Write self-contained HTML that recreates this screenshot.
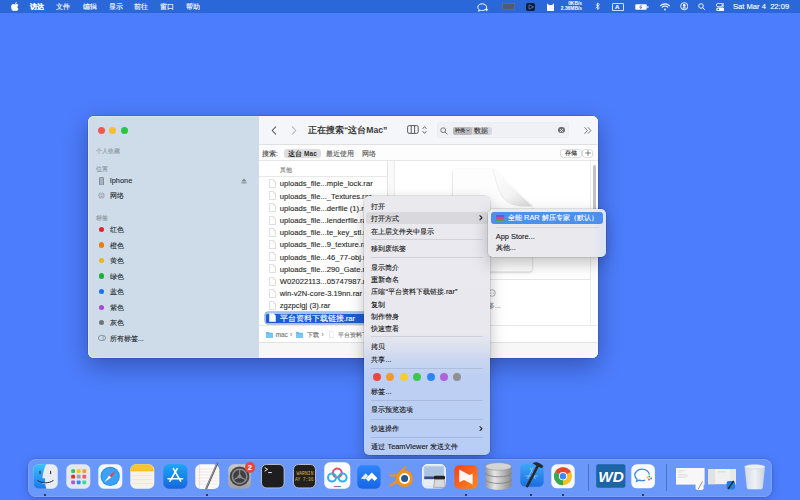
<!DOCTYPE html>
<html><head><meta charset="utf-8">
<style>
*{margin:0;padding:0;box-sizing:border-box}
html,body{width:800px;height:500px;overflow:hidden}
body{position:relative;-webkit-text-stroke:.12px currentColor;background:#4c7dfc;font-family:"Liberation Sans",sans-serif;color:#222;-webkit-font-smoothing:antialiased}
.a{position:absolute}
.t{position:absolute;white-space:nowrap;line-height:1}
#menubar{left:0;top:0;width:800px;height:13.3px;background:#2a67d8}
#menubar .t{color:#fff;font-size:7px;top:3px}
#win{left:87.5px;top:115.5px;width:510.2px;height:242px;border-radius:6px;overflow:hidden;background:#fff;box-shadow:0 8px 24px rgba(0,0,40,.33),0 0 0 .5px rgba(0,0,0,.22)}
#side{left:0;top:0;width:171px;height:242px;background:#cddce8}
.tl{width:7px;height:7px;border-radius:50%;top:11.1px}
.sh{font-size:6px;color:#8c959d}
.si{font-size:7.4px;color:#2a2f35}
.dot{width:5.6px;height:5.6px;border-radius:50%}
#main{left:171px;top:0;width:339.2px;height:242px;background:#fff}
#toolbar{left:0;top:0;width:339.2px;height:29px;background:#f5f6f9;border-bottom:.6px solid #dfe0e3}
#scope{left:0;top:29px;width:339.2px;height:16.5px;background:#fdfdfd;border-bottom:.6px solid #e6e6e6}
.ft{font-size:7.65px;color:#2b2b2b}
#menu{left:364px;top:196px;width:125.8px;height:259px;border-radius:5px;background:linear-gradient(#e9e9ee 0,#e8e8ee 138px,#dce1ee 150px,#c8d5f0 165px,#bdd0f3 180px,#b8cdf4 100%);box-shadow:0 0 0 .5px rgba(0,0,0,.18),0 6px 16px rgba(0,0,0,.25)}
.mi{font-size:7.4px;color:#1a1a1a}
.sep{height:.6px;background:rgba(40,40,70,.12);left:7px;width:111.5px}
#sub{left:488px;top:208.75px;width:118.4px;height:48.2px;border-radius:5px;background:linear-gradient(90deg,#e9e9ee 0,#e9e9ee 106px,#e0e4f0 113px,#dde3f2 100%);box-shadow:0 0 0 .5px rgba(0,0,0,.18),0 6px 16px rgba(0,0,0,.25)}
#dock{left:27.5px;top:458.75px;width:744.8px;height:38px;border-radius:8px;background:#6a97fa;box-shadow:inset 0 0 0 .5px rgba(255,255,255,.25),0 0 0 .5px rgba(30,40,120,.25),0 2px 8px rgba(20,30,120,.25)}
.ic{position:absolute;top:5px;width:25px;height:25px;border-radius:5.5px}
.ind{position:absolute;width:2.2px;height:2.2px;border-radius:50%;background:#1a1a2a;top:35px}
</style></head><body>

<div id="menubar" class="a">
  <svg class="a" style="left:11px;top:2px" width="8" height="9" viewBox="0 0 16 19"><path fill="#fff" d="M13.3 10.1c0-2.4 2-3.6 2.1-3.7-1.2-1.7-3-1.9-3.6-2-1.5-.2-3 .9-3.8.9-.8 0-2-.9-3.3-.9C3 4.5 1.4 5.5.6 7c-1.7 3-.4 7.4 1.2 9.8.8 1.2 1.8 2.5 3 2.4 1.2 0 1.7-.8 3.1-.8 1.5 0 1.9.8 3.2.8 1.3 0 2.1-1.2 2.9-2.4.9-1.4 1.3-2.7 1.3-2.8-.1 0-2.5-1-2.5-3.9zM10.9 2.9c.7-.8 1.1-1.9 1-3-1 0-2.1.7-2.8 1.5-.6.7-1.2 1.8-1 2.9 1.1.1 2.1-.6 2.8-1.4z"/></svg>
  <div class="t" style="left:30px;font-weight:bold">访达</div>
  <div class="t" style="left:56px">文件</div>
  <div class="t" style="left:82.5px">编辑</div>
  <div class="t" style="left:108.5px">显示</div>
  <div class="t" style="left:134px">前往</div>
  <div class="t" style="left:160px">窗口</div>
  <div class="t" style="left:186px">帮助</div>
  <svg class="a" style="left:477px;top:3px" width="12" height="9" viewBox="0 0 12 9"><path d="M5.2 .8C2.6.8.8 2.3.8 4.2c0 1 .5 1.8 1.3 2.4L1.6 8.2 3.6 7.3c.5.2 1 .2 1.6.2 2.6 0 4.4-1.5 4.4-3.3S7.8.8 5.2.8z" fill="none" stroke="#fff" stroke-width="1"/><path d="M9.6 5.2v3M8.1 6.7h3" stroke="#fff" stroke-width=".9"/></svg>
  <div class="a" style="left:501.5px;top:2.8px;width:13px;height:6.8px;border-radius:1px;background:#4b5c7d;box-shadow:inset 0 0 0 .5px #6a7a9a"></div>
  <div class="a" style="left:526.2px;top:2.6px;width:9px;height:8.2px;border-radius:2px;background:#0f1d3a"></div>
  <svg class="a" style="left:527.5px;top:3.8px" width="6.5" height="6" viewBox="0 0 6.5 6"><path d="M1 .8 5.5 3 1 5.2z" fill="none" stroke="#5a7ab0" stroke-width=".8"/></svg>
  <svg class="a" style="left:546px;top:2.5px" width="9" height="8.5" viewBox="0 0 9 8.5"><path d="M1 .3 2.8 2h3.4L8 .3v8H1z" fill="#fff"/></svg>
  <div class="t" style="left:556px;width:26px;text-align:right;top:1.9px;font-size:4.9px;font-weight:bold;-webkit-text-stroke:0;color:#fff">0KB/s</div>
  <div class="t" style="left:556px;width:26px;text-align:right;top:6.6px;font-size:4.9px;font-weight:bold;-webkit-text-stroke:0;color:#fff">2.36MB/s</div>
  <svg class="a" style="left:594.8px;top:2.4px" width="5.5" height="8.5" viewBox="0 0 5.5 8.5"><path d="M.7 2.3 4.4 5.8 2.6 7.6V.9l1.8 1.8L.7 6.2" fill="none" stroke="#fff" stroke-width=".8" stroke-linejoin="round"/></svg>
  <div class="a" style="left:612.3px;top:2.6px;width:11.8px;height:8.2px;border-radius:1.5px;box-shadow:inset 0 0 0 .8px #fff"></div>
  <div class="t" style="left:615.1px;top:3.9px;font-size:6px;font-weight:bold;color:#fff">A</div>
  <svg class="a" style="left:635px;top:3.8px" width="14" height="6" viewBox="0 0 14 6"><rect x=".3" y=".3" width="11.5" height="5.4" rx="1.3" fill="#fff"/><rect x="12.2" y="2" width="1.3" height="2" rx=".5" fill="#fff" opacity=".8"/><path d="M6.6 .8 4.6 3.2h2.2L5.2 5.2" fill="none" stroke="#2c63d8" stroke-width=".8"/></svg>
  <svg class="a" style="left:659.6px;top:3px" width="10" height="7.5" viewBox="0 0 10 7.5"><path d="M.6 2.6C3 .3 7 .3 9.4 2.6" fill="none" stroke="#fff" stroke-width="1.1" stroke-linecap="round"/><path d="M2.2 4.2c1.6-1.4 4-1.4 5.6 0" fill="none" stroke="#fff" stroke-width="1.1" stroke-linecap="round"/><circle cx="5" cy="6.5" r=".9" fill="#fff"/></svg>
  <svg class="a" style="left:679.8px;top:2.4px" width="8.5" height="8.5" viewBox="0 0 8.5 8.5"><circle cx="4.25" cy="4.25" r="3.6" fill="none" stroke="#fff" stroke-width=".9"/><circle cx="4.25" cy="3.4" r="1.3" fill="#fff"/><path d="M2 6.6c.6-1 1.3-1.4 2.25-1.4S5.9 5.6 6.5 6.6" fill="#fff"/></svg>
  <svg class="a" style="left:697.8px;top:2.8px" width="7.5" height="7.5" viewBox="0 0 7.5 7.5"><circle cx="3" cy="3" r="2.3" fill="none" stroke="#fff" stroke-width=".9"/><path d="M4.7 4.7 6.9 6.9" stroke="#fff" stroke-width="1" stroke-linecap="round"/></svg>
  <svg class="a" style="left:715.8px;top:2.6px" width="8.5" height="8.5" viewBox="0 0 8.5 8.5"><rect x=".4" y=".4" width="7.7" height="3.3" rx="1.6" fill="none" stroke="#fff" stroke-width=".8"/><circle cx="6.3" cy="2.05" r=".9" fill="#fff"/><rect x=".2" y="4.6" width="8.1" height="3.7" rx="1.8" fill="#fff"/><circle cx="2.2" cy="6.45" r=".9" fill="#2c63d8"/></svg>
  <div class="t" style="left:733px;font-size:7.6px;top:2.6px">Sat Mar 4&nbsp; 22:09</div>
</div>

<div id="win" class="a">
  <div id="side" class="a">
    <div class="a tl" style="left:10.8px;background:#ee5a52"></div>
    <div class="a tl" style="left:21.9px;background:#f5bd2f"></div>
    <div class="a tl" style="left:33px;background:#2bc640"></div>
    <div class="t sh" style="left:8.7px;top:32px">个人收藏</div>
    <div class="t sh" style="left:8.7px;top:50.6px">位置</div>
    <svg class="a" style="left:11.5px;top:61.2px" width="5" height="8.5" viewBox="0 0 5 8.5"><rect x=".4" y=".4" width="4.2" height="7.7" rx=".9" fill="#aab4be" stroke="#6d7680" stroke-width=".8"/></svg>
    <svg class="a" style="left:153.5px;top:62.5px" width="6" height="6" viewBox="0 0 6 6"><path d="M3 .5 5.6 3.4H.4z" fill="#7c858e"/><rect x=".4" y="4.4" width="5.2" height="1" fill="#7c858e"/></svg>
    <svg class="a" style="left:10.4px;top:76.8px" width="7" height="7" viewBox="0 0 7 7"><circle cx="3.5" cy="3.5" r="3.1" fill="#9aa4ae"/><path d="M.8 2.6c1.8.9 3.6.9 5.4 0M.8 4.4c1.8-.9 3.6-.9 5.4 0M3.5.4c-1.4 2-1.4 4.2 0 6.2M3.5.4c1.4 2 1.4 4.2 0 6.2" fill="none" stroke="#d6e0ea" stroke-width=".55"/></svg>
    <svg class="a" style="left:10.2px;top:219.7px" width="8" height="6" viewBox="0 0 8 6"><rect x=".4" y=".6" width="7.2" height="4.8" rx="2.4" fill="none" stroke="#6d7680" stroke-width=".7"/><path d="M5.2.8v4.4" stroke="#6d7680" stroke-width=".5"/></svg>
    <div class="t si" style="left:22.2px;top:61.5px">Iphone</div>
    <div class="t si" style="left:22.2px;top:76.6px">网络</div>
    <div class="t sh" style="left:8.7px;top:99px">标签</div>
    <div class="a dot" style="left:11px;top:111.3px;background:#e8202a"></div>
    <div class="t si" style="left:22.2px;top:110.7px">红色</div>
    <div class="a dot" style="left:11px;top:126.7px;background:#ee7d10"></div>
    <div class="t si" style="left:22.2px;top:126px">橙色</div>
    <div class="a dot" style="left:11px;top:142.2px;background:#e8b81a"></div>
    <div class="t si" style="left:22.2px;top:141.5px">黄色</div>
    <div class="a dot" style="left:11px;top:157.9px;background:#20b03a"></div>
    <div class="t si" style="left:22.2px;top:157.3px">绿色</div>
    <div class="a dot" style="left:11px;top:173.2px;background:#1a72f0"></div>
    <div class="t si" style="left:22.2px;top:172.6px">蓝色</div>
    <div class="a dot" style="left:11px;top:189px;background:#a848d0"></div>
    <div class="t si" style="left:22.2px;top:188.4px">紫色</div>
    <div class="a dot" style="left:11px;top:204.3px;background:#6f747a"></div>
    <div class="t si" style="left:22.2px;top:203.7px">灰色</div>
    <div class="t si" style="left:22.2px;top:219.4px">所有标签...</div>
  </div>
  <div id="main" class="a">
    <div id="toolbar" class="a">
      <svg class="a" style="left:12px;top:10px" width="6" height="9" viewBox="0 0 6 9"><path d="M4.6 .8 1.2 4.5 4.6 8.2" fill="none" stroke="#5a5a5e" stroke-width="1.1" stroke-linecap="round" stroke-linejoin="round"/></svg>
      <svg class="a" style="left:32px;top:10px" width="6" height="9" viewBox="0 0 6 9"><path d="M1.4 .8 4.8 4.5 1.4 8.2" fill="none" stroke="#b4b4b8" stroke-width="1.1" stroke-linecap="round" stroke-linejoin="round"/></svg>
      <div class="t" style="left:49.5px;top:10.4px;font-size:8.6px;font-weight:bold;-webkit-text-stroke:0;color:#3a3a3a">正在搜索“这台Mac”</div>
      <svg class="a" style="left:148.5px;top:9.6px" width="12" height="9" viewBox="0 0 12 9"><rect x=".6" y=".6" width="10.6" height="7.8" rx="1.6" fill="none" stroke="#5a5a5e" stroke-width="1"/><path d="M4.2 .8v7.4M7.6 .8v7.4" stroke="#5a5a5e" stroke-width="1"/></svg>
      <svg class="a" style="left:163px;top:9.3px" width="5" height="10" viewBox="0 0 5 10"><path d="M.8 3.6 2.5 1.6 4.2 3.6M.8 6.4 2.5 8.4 4.2 6.4" fill="none" stroke="#5a5a5e" stroke-width=".9" stroke-linecap="round" stroke-linejoin="round"/></svg>
      <div class="a" style="left:178.2px;top:6.9px;width:132px;height:15.2px;border-radius:4px;background:#f0f1f5;box-shadow:inset 0 0 0 .5px #e8e9ee"></div>
      <svg class="a" style="left:181.5px;top:11px" width="8" height="8" viewBox="0 0 8 8"><circle cx="3.2" cy="3.2" r="2.4" fill="none" stroke="#6a6a6e" stroke-width=".9"/><path d="M5 5 7.2 7.2" stroke="#6a6a6e" stroke-width=".9" stroke-linecap="round"/></svg>
      <div class="a" style="left:194.2px;top:11px;width:39.6px;height:8.4px;border-radius:2px;background:#d8d8dc"></div>
      <div class="a" style="left:194.2px;top:11px;width:19.8px;height:8.4px;border-radius:2px;background:#b8b8bd"></div>
      <div class="t" style="left:196px;top:12.9px;font-size:5px;color:#333">种类</div><svg class="a" style="left:207.6px;top:13.9px" width="4" height="3" viewBox="0 0 4 3"><path d="M.6 .7 2 2.1 3.4 .7" fill="none" stroke="#333" stroke-width=".7"/></svg>
      <div class="t" style="left:215.5px;top:12.3px;font-size:6.6px;color:#333">数据</div>
      <div class="a" style="left:299.5px;top:11.2px;width:6.8px;height:6.8px;border-radius:50%;background:#6e6e72"></div>
      <svg class="a" style="left:299.4px;top:11.1px" width="7" height="7" viewBox="0 0 7 7"><path d="M2.2 2.2 4.8 4.8M4.8 2.2 2.2 4.8" stroke="#efeff1" stroke-width=".9" stroke-linecap="round"/></svg>
      <svg class="a" style="left:325.2px;top:11.4px" width="8" height="7" viewBox="0 0 8 7"><path d="M.8 .6 3.4 3.5.8 6.4M4.2 .6 6.8 3.5 4.2 6.4" fill="none" stroke="#6a6a6e" stroke-width=".9" stroke-linecap="round" stroke-linejoin="round"/></svg>
    </div>
    <div id="scope" class="a">
      <div class="t" style="left:3.5px;top:6.2px;font-size:6.5px;color:#444">搜索:</div>
      <div class="a" style="left:25.8px;top:4.9px;width:37px;height:8.8px;border-radius:3px;background:#dededf"></div>
      <div class="t" style="left:29.8px;top:6.2px;font-size:6.5px;font-weight:bold;-webkit-text-stroke:0;color:#2e2e2e">这台 Mac</div>
      <div class="t" style="left:67.5px;top:6.2px;font-size:6.5px;color:#555">最近使用</div>
      <div class="t" style="left:103.5px;top:6.2px;font-size:6.5px;color:#555">网络</div>
      <div class="a" style="left:302.3px;top:5.2px;width:20.6px;height:7px;border-radius:1.8px;background:#fff;box-shadow:0 0 0 .6px #c4c4c8"></div>
      <div class="t" style="left:306px;top:5.6px;font-size:6.4px;color:#333">存储</div>
      <div class="a" style="left:324.9px;top:5.2px;width:8.8px;height:7px;border-radius:1.8px;background:#fff;box-shadow:0 0 0 .6px #c4c4c8"></div>
      <svg class="a" style="left:326.3px;top:5.7px" width="6" height="6" viewBox="0 0 6 6"><path d="M3 .2v5.6M.2 3h5.6" stroke="#444" stroke-width=".65"/></svg>
    </div>
    <div id="list" class="a" style="left:0;top:45.5px;width:128px;height:164px;background:#fff">
      <div class="a" style="left:0;top:0;width:128px;height:16px;background:#fff;border-bottom:.6px solid #e8e8e8"></div>
      <div class="t" style="left:21px;top:7px;font-size:5.8px;color:#777">其他</div>
      <svg class="a" style="left:10px;top:18.00px" width="7" height="9" viewBox="0 0 7 9"><path d="M.5 .5h3.9L6.5 2.6v5.9H.5z" fill="#fff" stroke="#c9c9cc" stroke-width=".6"/><path d="M4.4 .5v2.1h2.1" fill="none" stroke="#d4d4d6" stroke-width=".5"/></svg>
      <div class="t ft" style="left:21.2px;top:19.40px">uploads_file...mple_lock.rar</div>
      <svg class="a" style="left:10px;top:30.20px" width="7" height="9" viewBox="0 0 7 9"><path d="M.5 .5h3.9L6.5 2.6v5.9H.5z" fill="#fff" stroke="#c9c9cc" stroke-width=".6"/><path d="M4.4 .5v2.1h2.1" fill="none" stroke="#d4d4d6" stroke-width=".5"/></svg>
      <div class="t ft" style="left:21.2px;top:31.60px">uploads_file..._Textures.rar</div>
      <svg class="a" style="left:10px;top:42.40px" width="7" height="9" viewBox="0 0 7 9"><path d="M.5 .5h3.9L6.5 2.6v5.9H.5z" fill="#fff" stroke="#c9c9cc" stroke-width=".6"/><path d="M4.4 .5v2.1h2.1" fill="none" stroke="#d4d4d6" stroke-width=".5"/></svg>
      <div class="t ft" style="left:21.2px;top:43.80px">uploads_file...derfile (1).rar</div>
      <svg class="a" style="left:10px;top:54.60px" width="7" height="9" viewBox="0 0 7 9"><path d="M.5 .5h3.9L6.5 2.6v5.9H.5z" fill="#fff" stroke="#c9c9cc" stroke-width=".6"/><path d="M4.4 .5v2.1h2.1" fill="none" stroke="#d4d4d6" stroke-width=".5"/></svg>
      <div class="t ft" style="left:21.2px;top:56.00px">uploads_file...lenderfile.rar</div>
      <svg class="a" style="left:10px;top:66.80px" width="7" height="9" viewBox="0 0 7 9"><path d="M.5 .5h3.9L6.5 2.6v5.9H.5z" fill="#fff" stroke="#c9c9cc" stroke-width=".6"/><path d="M4.4 .5v2.1h2.1" fill="none" stroke="#d4d4d6" stroke-width=".5"/></svg>
      <div class="t ft" style="left:21.2px;top:68.20px">uploads_file...te_key_stl.rar</div>
      <svg class="a" style="left:10px;top:79.00px" width="7" height="9" viewBox="0 0 7 9"><path d="M.5 .5h3.9L6.5 2.6v5.9H.5z" fill="#fff" stroke="#c9c9cc" stroke-width=".6"/><path d="M4.4 .5v2.1h2.1" fill="none" stroke="#d4d4d6" stroke-width=".5"/></svg>
      <div class="t ft" style="left:21.2px;top:80.40px">uploads_file...9_texture.rar</div>
      <svg class="a" style="left:10px;top:91.20px" width="7" height="9" viewBox="0 0 7 9"><path d="M.5 .5h3.9L6.5 2.6v5.9H.5z" fill="#fff" stroke="#c9c9cc" stroke-width=".6"/><path d="M4.4 .5v2.1h2.1" fill="none" stroke="#d4d4d6" stroke-width=".5"/></svg>
      <div class="t ft" style="left:21.2px;top:92.60px">uploads_file...46_77-obj.rar</div>
      <svg class="a" style="left:10px;top:103.40px" width="7" height="9" viewBox="0 0 7 9"><path d="M.5 .5h3.9L6.5 2.6v5.9H.5z" fill="#fff" stroke="#c9c9cc" stroke-width=".6"/><path d="M4.4 .5v2.1h2.1" fill="none" stroke="#d4d4d6" stroke-width=".5"/></svg>
      <div class="t ft" style="left:21.2px;top:104.80px">uploads_file...290_Gate.rar</div>
      <svg class="a" style="left:10px;top:115.60px" width="7" height="9" viewBox="0 0 7 9"><path d="M.5 .5h3.9L6.5 2.6v5.9H.5z" fill="#fff" stroke="#c9c9cc" stroke-width=".6"/><path d="M4.4 .5v2.1h2.1" fill="none" stroke="#d4d4d6" stroke-width=".5"/></svg>
      <div class="t ft" style="left:21.2px;top:117.00px">W02022113...05747987.rar</div>
      <svg class="a" style="left:10px;top:127.80px" width="7" height="9" viewBox="0 0 7 9"><path d="M.5 .5h3.9L6.5 2.6v5.9H.5z" fill="#fff" stroke="#c9c9cc" stroke-width=".6"/><path d="M4.4 .5v2.1h2.1" fill="none" stroke="#d4d4d6" stroke-width=".5"/></svg>
      <div class="t ft" style="left:21.2px;top:129.20px">win-v2N-core-3.19nn.rar</div>
      <svg class="a" style="left:10px;top:140.00px" width="7" height="9" viewBox="0 0 7 9"><path d="M.5 .5h3.9L6.5 2.6v5.9H.5z" fill="#fff" stroke="#c9c9cc" stroke-width=".6"/><path d="M4.4 .5v2.1h2.1" fill="none" stroke="#d4d4d6" stroke-width=".5"/></svg>
      <div class="t ft" style="left:21.2px;top:141.40px">zgzpclgj (3).rar</div>
      <div class="a" style="left:6.25px;top:150.9px;width:130px;height:12.6px;border-radius:3.2px;background:#9fc3f6;box-shadow:0 0 0 .5px #7d8fb0"></div><div class="a" style="left:7.6px;top:152.6px;width:128px;height:9.2px;border-radius:1.6px;background:#1c5cd4"></div>
      <svg class="a" style="left:10px;top:152.20px" width="7" height="9" viewBox="0 0 7 9"><path d="M.5 .5h3.9L6.5 2.6v5.9H.5z" fill="#fff" stroke="#e8eefc" stroke-width=".6"/></svg>
      <div class="t ft" style="left:21.2px;top:153.60px;color:#fff">平台资料下载链接.rar</div>
    </div>
    <div class="a" style="left:128px;top:45.5px;width:8.1px;height:164px;background:#fafafa;border-left:.6px solid #e4e4e4;border-right:.6px solid #ececec"></div>
    <div id="prev" class="a" style="left:136.1px;top:45.5px;width:195px;height:164px;background:#fff">
      <svg class="a" style="left:54.8px;top:4.2px" width="87" height="110" viewBox="-4 -4 87 110"><defs><filter id="ds" x="-10%" y="-10%" width="120%" height="120%"><feGaussianBlur in="SourceAlpha" stdDeviation="1"/><feOffset dy=".5"/><feComponentTransfer><feFuncA type="linear" slope=".28"/></feComponentTransfer><feMerge><feMergeNode/><feMergeNode in="SourceGraphic"/></feMerge></filter><linearGradient id="fold" x1="0" y1="0" x2="1" y2="1"><stop offset="0" stop-color="#ffffff"/><stop offset=".55" stop-color="#f4f4f4"/><stop offset="1" stop-color="#d6d6d6"/></linearGradient></defs><path d="M3 0H39.6L79 37V99.3a3 3 0 0 1-3 3H3a3 3 0 0 1-3-3V3a3 3 0 0 1 3-3z" fill="#fdfdfd" filter="url(#ds)"/><path d="M39.6 0 79 37C70 37.5 60 37.5 53 32 45 25 43 10 39.6 0z" fill="url(#fold)"/><path d="M79 37C70 37.5 60 37.5 53 32 45 25 43 10 39.6 0" fill="none" stroke="#dcdcdc" stroke-width=".5"/></svg>
      <div class="a" style="left:4px;top:118.2px;width:191px;height:.6px;background:#e6e6e6"></div>
      <svg class="a" style="left:93.5px;top:127.5px" width="8" height="8" viewBox="0 0 8 8"><circle cx="4" cy="4" r="3.3" fill="none" stroke="#777" stroke-width=".6"/><circle cx="2.5" cy="4" r=".45" fill="#777"/><circle cx="4" cy="4" r=".45" fill="#777"/><circle cx="5.5" cy="4" r=".45" fill="#777"/></svg>
      <div class="t" style="left:86.5px;top:142.2px;font-size:6.6px;color:#888">更多...</div>
    </div>
    <div class="a" style="left:331.1px;top:45.5px;width:7.9px;height:164px;background:#fff;border-left:.6px solid #ececec"></div>
    <div class="a" style="left:334px;top:49.2px;width:3.4px;height:46px;border-radius:1.7px;background:#c2c2c4"></div>
    <div id="path" class="a" style="left:0;top:209.5px;width:339px;height:17px;background:#fff;border-top:.6px solid #e8e8e8">
      <svg class="a" style="left:7.75px;top:5.5px" width="7" height="6" viewBox="0 0 7 6"><path d="M0 .6C0 .3.3 0 .6 0h2l.7.8h3.1c.3 0 .6.3.6.6V5.4c0 .3-.3.6-.6.6H.6C.3 6 0 5.7 0 5.4z" fill="#5fb4ea"/><path d="M0 1.6h7V5.4c0 .3-.3.6-.6.6H.6C.3 6 0 5.7 0 5.4z" fill="#7cc6f4"/></svg>
      <div class="t" style="left:17.2px;top:6px;font-size:6.4px;color:#777">mac</div>
      <div class="t" style="left:31.5px;top:5.6px;font-size:6.6px;color:#888">›</div>
      <svg class="a" style="left:37.75px;top:5.5px" width="7" height="6" viewBox="0 0 7 6"><path d="M0 .6C0 .3.3 0 .6 0h2l.7.8h3.1c.3 0 .6.3.6.6V5.4c0 .3-.3.6-.6.6H.6C.3 6 0 5.7 0 5.4z" fill="#5fb4ea"/><path d="M0 1.6h7V5.4c0 .3-.3.6-.6.6H.6C.3 6 0 5.7 0 5.4z" fill="#7cc6f4"/></svg>
      <div class="t" style="left:48.2px;top:5.9px;font-size:6.4px;color:#777">下载</div>
      <div class="t" style="left:63px;top:5.6px;font-size:6.6px;color:#888">›</div>
      <svg class="a" style="left:70px;top:4.8px" width="5.5" height="7" viewBox="0 0 5.5 7"><path d="M.3 .3h3.2l1.7 1.7v4.7H.3z" fill="#fff" stroke="#c8c8ca" stroke-width=".5"/></svg>
      <div class="t" style="left:79px;top:5.9px;font-size:6.4px;color:#777">平台资料下载链接.rar</div>
    </div>
    <div id="status" class="a" style="left:0;top:226.5px;width:339.2px;height:15.5px;background:#f7f7f8;border-top:.6px solid #e2e2e2"></div>
  </div>
</div>

<div class="a" style="left:87.5px;top:115.5px;width:510.2px;height:242px;border-radius:6px;box-shadow:inset 0 0 0 .6px rgba(255,255,255,.55)"></div>
<div id="menu" class="a">
  <div class="a" style="left:2px;top:15.6px;width:122.6px;height:12.4px;border-radius:3px;background:#d9d9dd"></div>
  <div class="t mi" style="left:7.4px;top:7.00px">打开</div>
  <div class="t mi" style="left:7.4px;top:19.00px">打开方式</div>
  <div class="t mi" style="left:7.4px;top:31.60px">在上层文件夹中显示</div>
  <div class="a sep" style="top:43.30px"></div>
  <div class="t mi" style="left:7.4px;top:49.40px">移到废纸篓</div>
  <div class="a sep" style="top:61.10px"></div>
  <div class="t mi" style="left:7.4px;top:67.60px">显示简介</div>
  <div class="t mi" style="left:7.4px;top:80.00px">重新命名</div>
  <div class="t mi" style="left:7.4px;top:92.00px">压缩“平台资料下载链接.rar”</div>
  <div class="t mi" style="left:7.4px;top:104.60px">复制</div>
  <div class="t mi" style="left:7.4px;top:117.00px">制作替身</div>
  <div class="t mi" style="left:7.4px;top:129.00px">快速查看</div>
  <div class="a sep" style="top:140.30px"></div>
  <div class="t mi" style="left:7.4px;top:147.40px">拷贝</div>
  <div class="t mi" style="left:7.4px;top:160.00px">共享...</div>
  <div class="a sep" style="top:171.70px"></div>
  <div class="a" style="left:9.00px;top:177.00px;width:8px;height:8px;border-radius:50%;background:#f0463e"></div>
  <div class="a" style="left:22.40px;top:177.00px;width:8px;height:8px;border-radius:50%;background:#f59a2a"></div>
  <div class="a" style="left:35.80px;top:177.00px;width:8px;height:8px;border-radius:50%;background:#f7cc30"></div>
  <div class="a" style="left:49.20px;top:177.00px;width:8px;height:8px;border-radius:50%;background:#3ec54e"></div>
  <div class="a" style="left:62.60px;top:177.00px;width:8px;height:8px;border-radius:50%;background:#2f86f2"></div>
  <div class="a" style="left:76.00px;top:177.00px;width:8px;height:8px;border-radius:50%;background:#b063d8"></div>
  <div class="a" style="left:89.40px;top:177.00px;width:8px;height:8px;border-radius:50%;background:#909094"></div>
  <div class="t mi" style="left:7.4px;top:191.60px">标签...</div>
  <div class="a sep" style="top:203.70px"></div>
  <div class="t mi" style="left:7.4px;top:210.00px">显示预览选项</div>
  <div class="a sep" style="top:222.70px"></div>
  <div class="t mi" style="left:7.4px;top:228.60px">快速操作</div>
  <div class="a sep" style="top:241.30px"></div>
  <div class="t mi" style="left:7.4px;top:246.60px">通过 TeamViewer 发送文件</div>
  <svg class="a" style="left:114.7px;top:19.30px" width="4" height="5.5" viewBox="0 0 4 5.5"><path d="M.9 .7 3 2.75.9 4.8" fill="none" stroke="#222" stroke-width="1.05" stroke-linecap="round" stroke-linejoin="round"/></svg>
  <svg class="a" style="left:114.7px;top:229.90px" width="4" height="5.5" viewBox="0 0 4 5.5"><path d="M.9 .7 3 2.75.9 4.8" fill="none" stroke="#222" stroke-width="1.05" stroke-linecap="round" stroke-linejoin="round"/></svg>
</div>
<div id="sub" class="a">
  <div class="a" style="left:2.85px;top:3.3px;width:112.55px;height:11.6px;border-radius:3px;background:#4c8fec"></div>
  <div class="a" style="left:7.75px;top:6.15px;width:7.85px;height:6.5px;background:linear-gradient(#7a52c8 0,#7a52c8 33%,#e23c9a 33%,#e23c9a 66%,#34b04a 66%)"></div>
  <div class="t mi" style="left:20px;top:5.15px;color:#fff">全能 RAR 解压专家（默认）</div>
  <div class="a sep" style="left:7.75px;top:18px;width:103px;background:rgba(40,40,70,.09)"></div>
  <div class="t mi" style="left:7.75px;top:24.4px">App Store...</div>
  <div class="t mi" style="left:7.75px;top:35.65px">其他...</div>
</div>

<div id="dock" class="a">
  <svg class="a" style="left:5.30px;top:4.85px" width="25" height="25" viewBox="0 0 25 25"><defs><linearGradient id="fb" x1="0" y1="0" x2="0" y2="1"><stop offset="0" stop-color="#3ec0fb"/><stop offset="1" stop-color="#1a78ee"/></linearGradient></defs><rect x=".3" y=".3" width="24.4" height="24.4" rx="5.5" fill="#e9edf1"/><path d="M5.8.3C2.8.3.3 2.8.3 5.8v13.4c0 3 2.5 5.5 5.5 5.5h7.6c-.6-1.6-1-3.2-1.2-5-.9 0-1.9 0-2.8-.2l.2-1c.8.1 1.7.2 2.5.2-.1-1.5-.1-3 0-4.4H9.4c.3-4 1.4-8.7 3.7-14.3z" fill="url(#fb)"/><path d="M7 7.4v2.2M17.6 7.4v2.2" stroke="#1b2a3a" stroke-width="1.1" stroke-linecap="round"/><path d="M4.8 16.6c4.2 3 11 3 15.4 0" fill="none" stroke="#1b2a3a" stroke-width="1" stroke-linecap="round"/></svg>
  <svg class="a" style="left:38.50px;top:4.85px" width="25" height="25" viewBox="0 0 25 25"><rect x=".3" y=".3" width="24" height="24.4" rx="5.5" fill="#e3e7ee"/><rect x="5.2" y="5.2" width="3.8" height="3.8" rx=".9" fill="#34c759"/><rect x="10.8" y="5.2" width="3.8" height="3.8" rx=".9" fill="#fcc21b"/><rect x="16.4" y="5.2" width="3.8" height="3.8" rx=".9" fill="#ff9b2a"/><rect x="5.2" y="10.8" width="3.8" height="3.8" rx=".9" fill="#e8302a"/><rect x="10.8" y="10.8" width="3.8" height="3.8" rx=".9" fill="#a0a0a5"/><rect x="16.4" y="10.8" width="3.8" height="3.8" rx=".9" fill="#f25d6c"/><rect x="5.2" y="16.4" width="3.8" height="3.8" rx=".9" fill="#a55be0"/><rect x="10.8" y="16.4" width="3.8" height="3.8" rx=".9" fill="#2a8cf4"/><rect x="16.4" y="16.4" width="3.8" height="3.8" rx=".9" fill="#3ed3a0"/></svg>
  <svg class="a" style="left:70.50px;top:4.85px" width="25" height="25" viewBox="0 0 25 25"><rect x=".3" y=".3" width="24" height="24.4" rx="5.5" fill="#f4f6f8"/><circle cx="12.2" cy="12.4" r="9.6" fill="#1f8ff0"/><circle cx="12.2" cy="12.4" r="8.6" fill="#3aa2f6"/><path d="M18.2 6.5 13.2 13.4 11.2 11.4z" fill="#f04040"/><path d="M6.2 18.3 11.2 11.4 13.2 13.4z" fill="#f5f5f5"/></svg>
  <svg class="a" style="left:102.50px;top:4.85px" width="25" height="25" viewBox="0 0 25 25"><rect x=".3" y=".3" width="24" height="24.4" rx="5.5" fill="#f6f2e8"/><path d="M5.8.3h12.4c3 0 5.5 2.5 5.5 5.5V7H.3V5.8C.3 2.8 2.8.3 5.8.3z" fill="#fbc52d"/><path d="M.3 7h24" stroke="#e0a818" stroke-width=".5"/><path d="M2 11.5h20.6M2 15.5h20.6M2 19.5h20.6" stroke="#dedad0" stroke-width=".4"/></svg>
  <svg class="a" style="left:135.40px;top:4.85px" width="25" height="25" viewBox="0 0 25 25"><defs><linearGradient id="ab" x1="0" y1="0" x2="0" y2="1"><stop offset="0" stop-color="#1ca6f6"/><stop offset="1" stop-color="#1766dc"/></linearGradient></defs><rect x=".3" y=".3" width="24" height="24.4" rx="5.5" fill="url(#ab)"/><path d="M14.2 4.6 7 17.2M10.4 4.6 17.6 17.2M5 14.8h14.6" stroke="#fff" stroke-width="1.6" stroke-linecap="round"/></svg>
  <svg class="a" style="left:167.50px;top:2.85px" width="25" height="28" viewBox="0 0 25 28"><rect x=".3" y="2.3" width="24" height="24.6" rx="5.5" fill="#fbfbfb"/><path d="M1.5 7h21.6M1.5 10h21.6M1.5 13h21.6M1.5 16h21.6M1.5 19h21.6M1.5 22h21.6" stroke="#e8c4c4" stroke-width=".4"/><path d="M4.6 3v23" stroke="#eab0b0" stroke-width=".4"/><path d="M22.6.6 11 27.2" stroke="#55595e" stroke-width="2"/><path d="M22.2.8 10.8 27" stroke="#c4c8cc" stroke-width=".6"/></svg>
  <svg class="a" style="left:200.10px;top:4.85px" width="25" height="25" viewBox="0 0 25 25"><defs><linearGradient id="sp" x1="0" y1="0" x2="0" y2="1"><stop offset="0" stop-color="#c9c9cb"/><stop offset="1" stop-color="#a0a0a4"/></linearGradient></defs><rect x=".3" y=".3" width="22.6" height="24.4" rx="5.5" fill="url(#sp)"/><circle cx="11.6" cy="12.4" r="9.8" fill="#444447"/><circle cx="11.6" cy="12.4" r="8" fill="#8a8a8e"/><circle cx="11.6" cy="12.4" r="6.4" fill="#3e3e41"/><circle cx="11.6" cy="12.4" r="2" fill="#8a8a8e"/><path d="M11.6 12.4V6.2M11.6 12.4 6.4 15.5M11.6 12.4l5.2 3.1" stroke="#8a8a8e" stroke-width="1.3"/></svg>
  <svg class="a" style="left:233.30px;top:5.05px" width="24" height="25" viewBox="0 0 24 25"><rect x=".5" y=".5" width="22.6" height="23.4" rx="5" fill="#1e1e20" stroke="#cfd3da" stroke-width=".8"/><path d="M3.6 3.6 6.6 5.4 3.6 7.2" fill="none" stroke="#fff" stroke-width=".9"/><path d="M7.2 8.6h3.6" stroke="#fff" stroke-width=".9"/></svg>
  <svg class="a" style="left:265.70px;top:5.05px" width="23.5" height="25" viewBox="0 0 23.5 25"><rect x=".5" y=".5" width="22" height="23.4" rx="5" fill="#222120" stroke="#cfd3da" stroke-width=".8"/><text x="3.4" y="10.6" font-family="Liberation Mono" font-size="4.6" fill="#d8b440" textLength="17">WARNIN</text><text x="2" y="17.2" font-family="Liberation Mono" font-size="4.6" fill="#d8b440" textLength="18.5">AY 7:36</text></svg>
  <svg class="a" style="left:296.10px;top:3.65px" width="27" height="27" viewBox="0 0 27 27"><rect x=".3" y=".3" width="26" height="26.4" rx="5.5" fill="#fff"/><circle cx="13.3" cy="11" r="4.4" fill="none" stroke="#e8445a" stroke-width="2"/><circle cx="8" cy="15.6" r="4" fill="none" stroke="#30b2e8" stroke-width="2"/><circle cx="18.6" cy="15.6" r="4" fill="none" stroke="#30b2e8" stroke-width="2"/><path d="M9.8 24.6h3.4" stroke="#e8445a" stroke-width="1"/><path d="M13.2 24.6h3.6" stroke="#3a6ad8" stroke-width="1"/></svg>
  <svg class="a" style="left:329.50px;top:6.25px" width="24" height="24" viewBox="0 0 24 24"><defs><linearGradient id="lh" x1="0" y1="0" x2="0" y2="1"><stop offset="0" stop-color="#2e86f8"/><stop offset="1" stop-color="#1766e8"/></linearGradient></defs><rect x=".3" y=".3" width="23.2" height="23.4" rx="5" fill="url(#lh)"/><path d="M3.8 13.8 8.6 8.2 11 10.8 8.2 14.2z" fill="#fff" opacity=".85"/><path d="M8.6 13.6 14.8 7.6 20.4 13.2 17.6 16 14.8 13.2 11.4 16.4z" fill="#fff"/></svg>
  <svg class="a" style="left:360.50px;top:5.25px" width="27" height="25" viewBox="0 0 27 25"><circle cx="16.5" cy="14.5" r="8.6" fill="#f0901e"/><path d="M10 8.5 16.8 2.2c.9-.8 2.2.3 1.4 1.3L13.6 9z" fill="#f0901e"/><path d="M11.5 10.2 1.6 10.6c-1.1 0-1.2 1.6 0 1.7L11 13z" fill="#f0901e"/><path d="M10.4 14.6 1.5 21c-.9.7 0 2 1 1.5l9.6-5.2z" fill="#f0901e"/><circle cx="16.6" cy="14.5" r="5.4" fill="#fff"/><circle cx="16.6" cy="14.5" r="3.5" fill="#265787"/></svg>
  <svg class="a" style="left:394.30px;top:5.05px" width="24.5" height="25" viewBox="0 0 24.5 25"><rect x=".6" y=".6" width="22.8" height="23.4" rx="4.5" fill="#dbe6f4" stroke="#f4f7fb" stroke-width="1"/><rect x="2.2" y="2.4" width="19.6" height="10" fill="#aac3e0"/><path d="M2.2 12.4h19.6v3H2.2z" fill="#3a4a8a"/><path d="M2.2 15.4h19.6V22H2.2z" fill="#e8eef2"/><rect x="12" y="11.8" width="11" height="3.6" rx="1.2" fill="#222"/><path d="M12.6 15.4h9.8l1 8H11.6z" fill="#d8dadc" stroke="#777" stroke-width=".5"/></svg>
  <svg class="a" style="left:426.25px;top:6.05px" width="24" height="24" viewBox="0 0 24 24"><defs><linearGradient id="ob" x1="0" y1="0" x2="1" y2="1"><stop offset="0" stop-color="#f4401a"/><stop offset="1" stop-color="#ff8a1e"/></linearGradient></defs><rect x=".3" y=".3" width="23.4" height="23.4" rx="5" fill="url(#ob)"/><path d="M5.2 4.6 17.8 11.2 5.2 17.2z" fill="#fff" opacity=".93"/><path d="M18.6 8.4V19.6L8.2 14z" fill="#fff" opacity=".93"/></svg>
  <svg class="a" style="left:457.50px;top:3.65px" width="27" height="28.5" viewBox="0 0 27 28.5"><defs><linearGradient id="db" x1="0" y1="0" x2="1" y2="0"><stop offset="0" stop-color="#9a9a9a"/><stop offset=".35" stop-color="#e6e6e6"/><stop offset="1" stop-color="#8a8a8a"/></linearGradient></defs><path d="M.6 4.5v19.5c0 2 5.8 3.8 12.9 3.8s12.9-1.8 12.9-3.8V4.5z" fill="url(#db)"/><ellipse cx="13.5" cy="4.5" rx="12.9" ry="3.8" fill="#d4d4d4" stroke="#8a8a8a" stroke-width=".5"/><path d="M.6 11c0 2 5.8 3.8 12.9 3.8S26.4 13 26.4 11M.6 17.6c0 2 5.8 3.8 12.9 3.8s12.9-1.8 12.9-3.8" fill="none" stroke="#7a7a7a" stroke-width=".8"/></svg>
  <svg class="a" style="left:492.00px;top:2.05px" width="24" height="27" viewBox="0 0 24 27"><defs><linearGradient id="xc" x1="0" y1="0" x2="0" y2="1"><stop offset="0" stop-color="#40a8f8"/><stop offset="1" stop-color="#1a6ee0"/></linearGradient></defs><rect x=".3" y="2.3" width="23.4" height="23.4" rx="5" fill="url(#xc)"/><path d="M13 6.5 7.5 18M10 6.5l5.5 11.5M5.6 15h12" stroke="#a8d8ff" stroke-width=".8" opacity=".8"/><path d="M17.8 4.8 7.2 25.2" stroke="#2a2a2c" stroke-width="2.6" stroke-linecap="round"/><path d="M12.6 2.2c2-1.4 5.2-1.4 8.2.8l2.6 2-1.4 2.2-4.4-1.6z" fill="#2a2a2c"/></svg>
  <svg class="a" style="left:523.90px;top:5.05px" width="24" height="25" viewBox="0 0 24 25"><rect x=".3" y=".3" width="23.4" height="24" rx="5.5" fill="#f8f9fa"/><circle cx="12" cy="12.2" r="9" fill="#f6bf26"/><path d="M12 12.2 4.2 7.7A9 9 0 0 1 19.8 7.7z" fill="#ea4335"/><path d="M12 12.2 4.2 7.7A9 9 0 0 0 12 21.2z" fill="#34a853"/><circle cx="12" cy="12.2" r="4.1" fill="#fff"/><circle cx="12" cy="12.2" r="3.2" fill="#4285f4"/></svg>
  <svg class="a" style="left:568.10px;top:5.50px" width="30" height="24" viewBox="0 0 30 24"><rect x=".2" y=".2" width="29.2" height="23.6" rx="2" fill="#1b64a6"/><text x="2.2" y="18" font-family="Liberation Sans" font-weight="bold" font-style="italic" font-size="15" fill="#fff" textLength="25.5" lengthAdjust="spacingAndGlyphs">WD</text></svg>
  <svg class="a" style="left:603.10px;top:4.85px" width="24.5" height="25" viewBox="0 0 24.5 25"><rect x=".3" y=".3" width="23.6" height="24" rx="5.5" fill="#fafcff"/><path d="M11 5.2c-4 0-7.2 2.6-7.2 5.8 0 1.7.9 3.2 2.3 4.2l-.6 2.2 2.6-1.2c.9.3 1.9.5 2.9.5 1.2 0 2.3-.2 3.2-.6" fill="none" stroke="#3a8ae8" stroke-width="1.3"/><path d="M18.2 10.6c0-3-3.2-5.4-7.2-5.4" fill="none" stroke="#3a8ae8" stroke-width="1.3"/><circle cx="16.4" cy="13.6" r="1" fill="#f6c230"/><circle cx="18.4" cy="12.4" r="1" fill="#44b860"/><circle cx="18" cy="15.6" r="1" fill="#e85a40"/><circle cx="20.2" cy="14.4" r="1" fill="#3a8ae8"/></svg>
  <svg class="a" style="left:648.00px;top:9.25px" width="29" height="22.5" viewBox="0 0 29 22.5"><rect x="0" y="0" width="28.6" height="16.6" fill="#f7f7f7"/><path d="M2 2.5h7M2 4h5M2 6.5h9M2 8h10M2 9.5h8" stroke="#c8c8c8" stroke-width=".4"/><rect x="19.6" y="13" width="8" height="9" rx="1.8" fill="#fafafa"/><path d="M26.5 13.5 22 21.5" stroke="#777" stroke-width=".8"/></svg>
  <svg class="a" style="left:680.30px;top:10.00px" width="28.5" height="21.5" viewBox="0 0 28.5 21.5"><rect x="0" y="0" width="28.2" height="15.2" fill="#f0f0f0"/><rect x="0" y="0" width="7" height="15.2" fill="#e2e2e2"/><rect x="22" y="0" width="6.2" height="15.2" fill="#e8e8e8"/><path d="M10 2.8h8" stroke="#c0c0c0" stroke-width=".5"/><rect x="18.6" y="12" width="8.4" height="8.4" rx="2" fill="#1f7fe8"/><path d="M25.6 11.8 20.2 19.8" stroke="#222" stroke-width="1.5"/></svg>
  <svg class="a" style="left:716.10px;top:5.25px" width="21.6" height="26" viewBox="0 0 21.6 26"><defs><linearGradient id="tr" x1="0" y1="0" x2="1" y2="0"><stop offset="0" stop-color="#d8dde4"/><stop offset=".5" stop-color="#f4f6f8"/><stop offset="1" stop-color="#d0d5dc"/></linearGradient></defs><path d="M.6 2.8 2.8 23.4c.1 1 1 1.8 2 1.8h12c1 0 1.9-.8 2-1.8l2.2-20.6z" fill="url(#tr)" opacity=".95"/><ellipse cx="10.8" cy="2.8" rx="10.2" ry="2.2" fill="#eef1f4" stroke="#c8cdd4" stroke-width=".5"/></svg>
  <div class="a" style="left:560.20px;top:4.9px;width:.6px;height:27.3px;background:rgba(30,40,90,.35)"></div>
  <div class="a" style="left:638.90px;top:4.9px;width:.6px;height:27.3px;background:rgba(30,40,90,.35)"></div>
  <div class="ind" style="left:16.60px"></div>
  <div class="ind" style="left:178.50px"></div>
  <div class="ind" style="left:437.40px"></div>
  <div class="ind" style="left:502.40px"></div>
  <div class="ind" style="left:534.60px"></div>
  <div class="ind" style="left:614.00px"></div>
  <div class="a" style="left:217.3px;top:3.6px;width:10.5px;height:10.5px;border-radius:50%;background:#f0443a"></div>
  <div class="t" style="left:220.2px;top:5.1px;font-size:7.6px;color:#fff;font-weight:bold">2</div>
</div>

</body></html>
